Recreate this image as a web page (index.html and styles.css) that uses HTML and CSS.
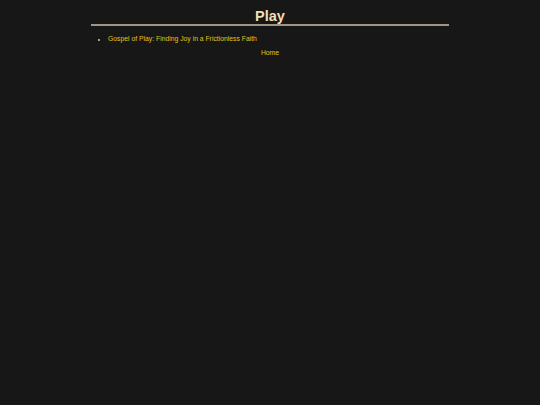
FILE: index.html
```html
<!DOCTYPE html>
<html>
<head>
<meta charset="utf-8">
<link rel="stylesheet" href="styles.css">
</head>
<body>
<div class="page">
  <h1 class="title">Play</h1>
  <ul class="list">
    <li><a href="#">Gospel of Play: Finding Joy in a Frictionless Faith</a></li>
  </ul>
  <div class="home"><a href="#">Home</a></div>
</div>
</body>
</html>
```
FILE: styles.css
```css
html, body {
  margin: 0;
  padding: 0;
  background: #171717;
}
body {
  font-family: "Liberation Sans", Arial, sans-serif;
  font-size: 6.8px;
  color: #e0c020;
}
.page {
  width: 358px;
  margin: 0 auto;
  padding-top: 8px;
}
.title {
  margin: 0;
  text-align: center;
  font-size: 14.5px;
  font-weight: bold;
  color: #f5deb3;
  line-height: 16px;
  padding-bottom: 0;
  border-bottom: 2px solid #a09580;
}
.list {
  margin: 8px 0 0 0;
  padding-left: 17px;
  line-height: 9px;
}
.list li::marker {
  color: #d8d0c0;
  font-size: 5px;
}
a {
  color: #e2c41c;
  text-decoration: none;
}
.home {
  text-align: center;
  margin-top: 5px;
  line-height: 9px;
}
```
